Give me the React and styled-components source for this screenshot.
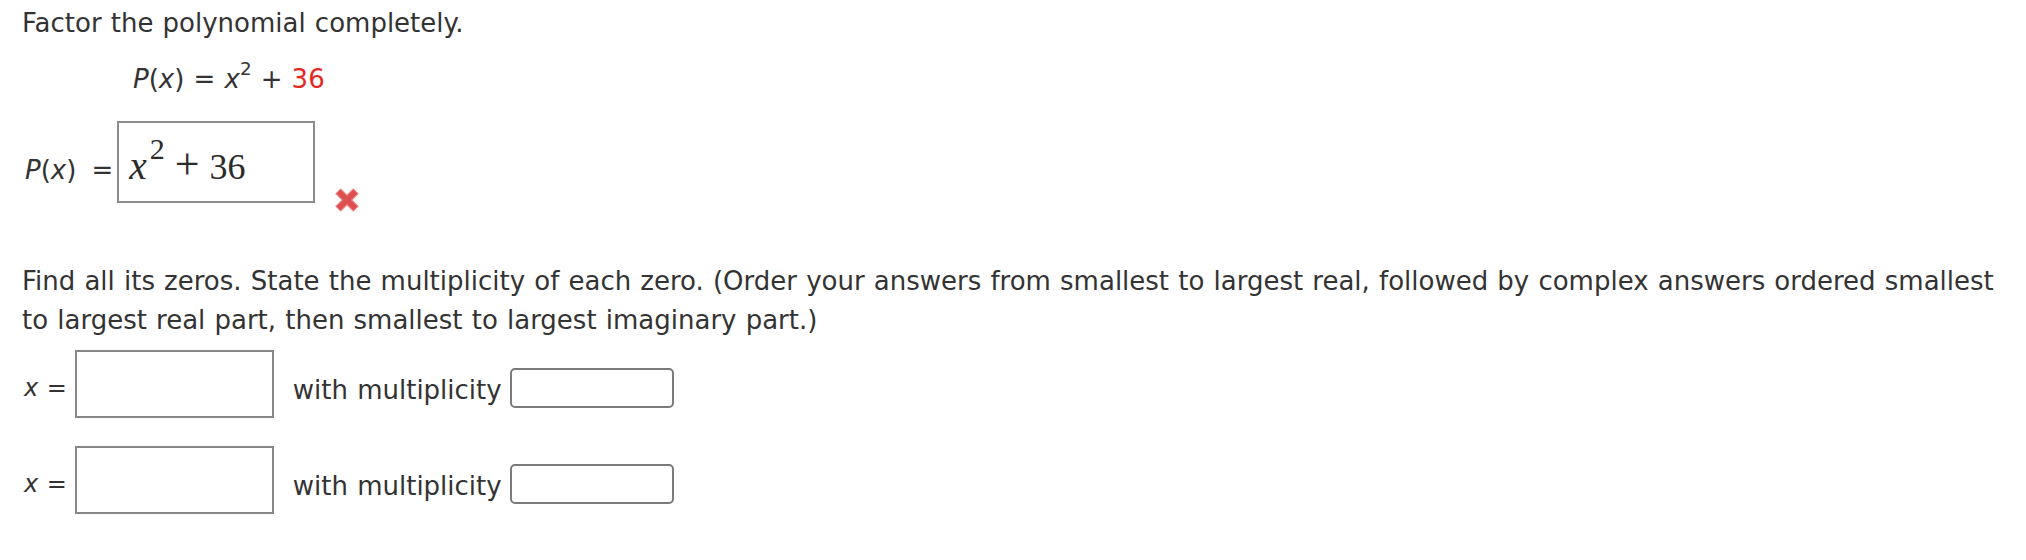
import styled, { createGlobalStyle } from "styled-components"

const GlobalStyle = createGlobalStyle`
    body {
        margin: 0;
        background: #ffffff;
        font-family: Verdana, "DejaVu Sans", sans-serif;
        color: #333333;
    }
`

function CrossIcon() {
    return (
        <svg width="24" height="24" viewBox="0 0 24 24">
            <g strokeLinecap="butt">
                <path d="M3 3 L21 21 M21 3 L3 21" stroke="#ec8a8a" strokeWidth="8" />
                <path d="M3.5 3.5 L20.5 20.5 M20.5 3.5 L3.5 20.5" stroke="#de5050" strokeWidth="5.5" />
            </g>
        </svg>
    )
}

function ZeroRow() {
    return (
        <Row>
            <RowLabel $top={18}><i>x</i> =</RowLabel>
            <Field $width={199} $height={68} />
            <RowText>with multiplicity</RowText>
            <Field $width={164} $height={40} $top={18} $round />
        </Row>
    )
}

function App() {
    return (
        <Page>
            <GlobalStyle />
            <Line>Factor the polynomial completely.</Line>

            <Formula>
                <i>P</i>(<i>x</i>) = <i>x</i><sup>2</sup> + <Red>36</Red>
            </Formula>

            <AnswerRow>
                <AnswerLabel>
                    <span><i>P</i>(<i>x</i>)</span>
                    <span>=</span>
                </AnswerLabel>
                <MathBox>
                    <MathVar>x</MathVar><MathSup>2</MathSup><MathOp>+</MathOp>36
                </MathBox>
                <Wrong><CrossIcon /></Wrong>
            </AnswerRow>

            <Paragraph>
                Find all its zeros. State the multiplicity of each zero. (Order your answers from smallest to largest real, followed by complex answers ordered smallest
                to largest real part, then smallest to largest imaginary part.)
            </Paragraph>

            <Rows>
                <ZeroRow />
                <ZeroRow />
            </Rows>
        </Page>
    )
}

export default App

const Page = styled.div`
    padding: 3px 22px 0 22px;
    font-size: 26px;
    line-height: 40px;
    word-spacing: 0.9px;
`

const Line = styled.div`
    white-space: nowrap;
`

const Formula = styled.div`
    margin: 16px 0 0 111px;
    white-space: nowrap;

    sup {
        font-size: 0.7em;
        line-height: 0;
        vertical-align: 0.7em;
    }
`

const Red = styled.span`
    color: #e8271f;
`

const AnswerRow = styled.div`
    display: flex;
    align-items: baseline;
    margin-top: 22px;
`

const AnswerLabel = styled.div`
    display: flex;
    gap: 15px;
    font-size: 26px;
    margin: 0 4px 0 3px;
`

const MathBox = styled.div`
    box-sizing: border-box;
    width: 198px;
    height: 82px;
    border: 2px solid #8c8c8c;
    padding: 25px 0 0 10px;
    font-family: "Liberation Serif", "DejaVu Serif", "Times New Roman", serif;
    font-size: 36px;
    line-height: 36px;
    color: #2b2b2b;
    white-space: nowrap;
    word-spacing: 0;
`

const MathVar = styled.span`
    font-style: italic;
    font-size: 1.1em;
`

const MathSup = styled.span`
    font-size: 30px;
    line-height: 0;
    vertical-align: 20px;
    margin-left: 3px;
`

const MathOp = styled.span`
    font-size: 44px;
    line-height: 0;
    margin: 0 10px 0 10px;
`

const Wrong = styled.div`
    align-self: flex-start;
    margin: 67px 0 0 20px;
    height: 24px;
    display: flex;
`

const Paragraph = styled.p`
    margin: 50px 0 0 0;
    line-height: 39px;
`

const Rows = styled.div`
    display: flex;
    flex-direction: column;
    gap: 28px;
    margin-top: 10px;
`

const Row = styled.div`
    display: flex;
    align-items: flex-start;
`

const RowLabel = styled.div`
    font-size: 24px;
    line-height: 40px;
    margin: ${(p) => p.$top}px 8px 0 2px;
    white-space: nowrap;
`

const RowText = styled.div`
    margin: 20px 8px 0 19px;
    white-space: nowrap;
`

const Field = styled.div`
    box-sizing: border-box;
    width: ${(p) => p.$width}px;
    height: ${(p) => p.$height}px;
    margin-top: ${(p) => p.$top || 0}px;
    border: 2px solid ${(p) => (p.$round ? "#7a7a7a" : "#878787")};
    border-radius: ${(p) => (p.$round ? "5px" : "0")};
    background: #ffffff;
`
